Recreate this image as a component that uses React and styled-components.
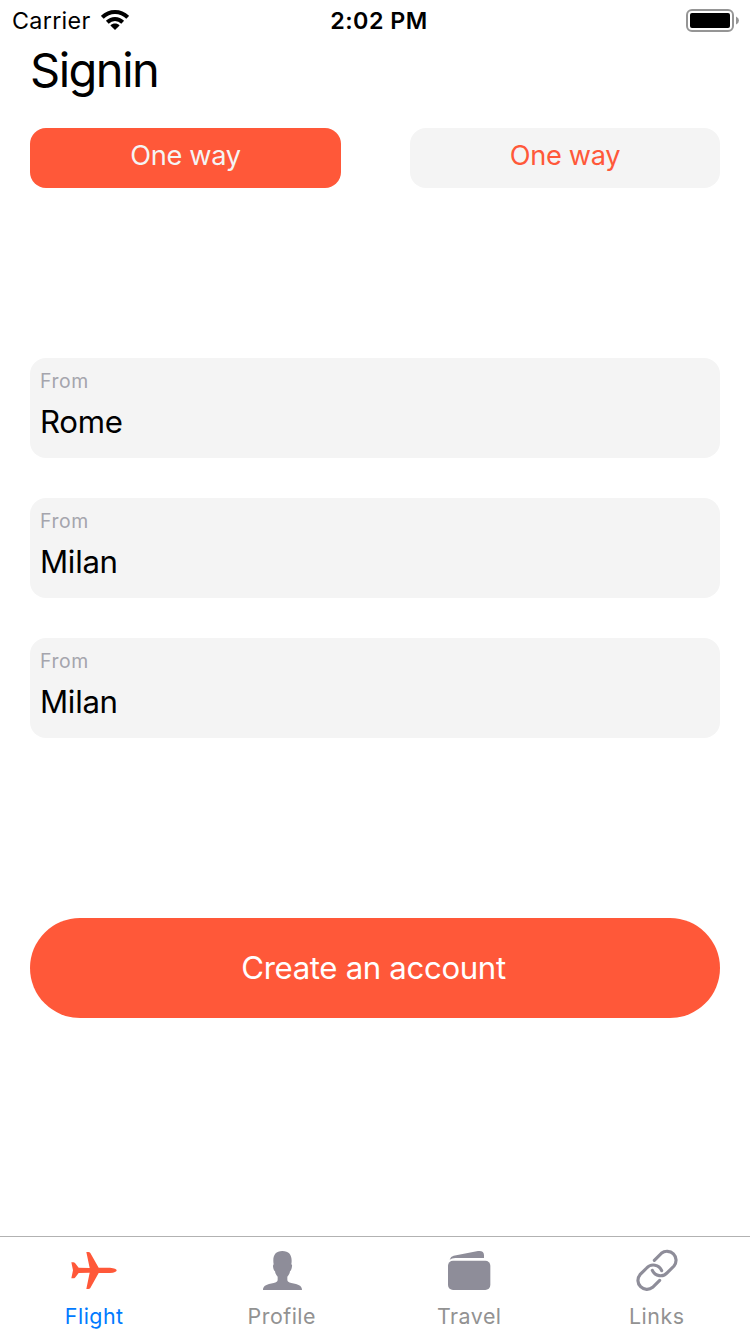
import React from 'react';
import styled, { createGlobalStyle } from 'styled-components';

const orange = '#ff5839';
const iconGray = '#8e8d99';

const GlobalStyle = createGlobalStyle`
  * { box-sizing: border-box; }
  body { margin: 0; background: #fff; }
  button { border: 0; padding: 0; font: inherit; }
`;

const Screen = styled.div`
  width: 750px;
  height: 1334px;
  display: flex;
  flex-direction: column;
  background: #fff;
  color: #000;
  font-family: Inter, "Liberation Sans", sans-serif;
  font-weight: 400;
  overflow: hidden;
`;

const StatusBar = styled.header`
  height: 40px;
  flex: none;
  display: grid;
  grid-template-columns: 1fr auto 1fr;
  align-items: center;
  padding: 2px 11px 0 12px;
  font-size: 23.3px;
  line-height: 38px;
`;

const Carrier = styled.div`
  display: flex;
  align-items: center;
  gap: 11px;
  letter-spacing: 0.3px;
  svg { display: block; margin-bottom: 2px; }
`;

const Clock = styled.div`
  font-weight: 600;
  letter-spacing: 0.5px;
  padding-left: 7px;
`;

const Battery = styled.svg`
  display: block;
  justify-self: end;
`;

const Content = styled.main`
  flex: 1;
  display: flex;
  flex-direction: column;
  padding: 0 30px;
`;

const Title = styled.h1`
  margin: 0;
  height: 88px;
  font-size: 47px;
  font-weight: 400;
  line-height: 59px;
  letter-spacing: -1.5px;
`;

const Toggle = styled.div`
  display: flex;
  justify-content: space-between;
`;

const ToggleButton = styled.button`
  width: ${(p) => (p.$active ? 311 : 310)}px;
  height: 60px;
  padding-bottom: 5px;
  border-radius: 16px;
  font-size: 27.2px;
  letter-spacing: -0.35px;
  line-height: 55px;
  background: ${(p) => (p.$active ? orange : '#f4f4f4')};
  color: ${(p) => (p.$active ? '#f4f4f4' : orange)};
`;

const Fields = styled.div`
  margin-top: 170px;
  display: flex;
  flex-direction: column;
  gap: 40px;
`;

const Field = styled.div`
  height: 100px;
  padding: 10px;
  border-radius: 16px;
  background: #f4f4f4;
`;

const FieldLabel = styled.div`
  font-size: 19.4px;
  line-height: 26px;
  letter-spacing: 0.6px;
  color: #a5a5ad;
`;

const FieldValue = styled.div`
  margin-top: 8px;
  font-size: 31.2px;
  line-height: 40px;
  letter-spacing: -0.3px;
`;

const Submit = styled.button`
  margin-top: 180px;
  height: 100px;
  border-radius: 50px;
  padding-right: 3px;
  background: ${orange};
  color: #fff;
  font-size: 31.2px;
  letter-spacing: -0.35px;
  line-height: 100px;
`;

const TabBar = styled.nav`
  height: 98px;
  flex: none;
  display: grid;
  grid-template-columns: repeat(4, 1fr);
  border-top: 1px solid #b2b2b2;
`;

const Tab = styled.div`
  display: flex;
  flex-direction: column;
  align-items: center;
  color: ${(p) => (p.$active ? '#007aff' : '#929292')};
  font-size: 21.4px;
  line-height: 28px;
  letter-spacing: 0.5px;
`;

const TabLabel = styled.span`
  padding-left: 1px;
`;

const IconBox = styled.div`
  height: 65px;
  display: flex;
  align-items: center;
  color: ${(p) => (p.$active ? orange : iconGray)};
  svg { display: block; overflow: visible; }
`;

const WifiIcon = () => (
  <svg width="28" height="20" viewBox="0 0 28 20" fill="none" stroke="#000" strokeWidth="4">
    <path d="M1.3 7.3C8.5 0.3 19.5 0.3 26.7 7.3" />
    <path d="M6.3 12.3C10.7 8 17.3 8 21.7 12.3" />
    <path d="M9.4 15.4C12 12.8 16 12.8 18.6 15.4L14 20Z" fill="#000" stroke="none" />
  </svg>
);

const PlaneIcon = () => (
  <svg width="90" height="65" viewBox="-3 21 270 195" fill="currentColor">
    <path d="M64 97H70Q73 97 75 99L86 113L119 114L109 66H115Q119 66 121 69L146 113H180Q200 115 200 121Q200 128 180 129H146L121 174Q119 177 115 177H109L119 128L86 129L75 143Q73 145 70 145H64L69 121Z" />
  </svg>
);

const PersonIcon = () => (
  <svg width="90" height="65" viewBox="0 21 270 195" fill="currentColor">
    <path d="M81 180C81 170 88 165 99 162L113 159C121 157 125 154 125 149V140C121 136 118 131 117 124C113 122 112 116 111 109Q111 104 113 103C109 79 116 63 139 63C162 63 170 79 166 103Q169 104 168 109C167 116 166 122 162 124C161 131 158 136 154 140V149C154 154 158 157 166 159L180 162C191 165 198 170 198 180Z" />
  </svg>
);

const WalletIcon = () => (
  <svg width="90" height="65" viewBox="0 21 270 195" fill="currentColor">
    <rect x="72" y="92" width="127" height="88" rx="15" />
    <path d="M77 89Q80 79 89 77L162 63Q180 61 180 76V84H94Q83 84 77 89Z" />
  </svg>
);

const LinkIcon = () => (
  <svg width="90" height="65" viewBox="-3 21 270 195" fill="none" stroke="currentColor" strokeWidth="9.5" strokeLinecap="round">
    <path d="M127 91L148 70A27 27 0 0 1 186 108L166 128A27 27 0 0 1 121 121" />
    <path d="M143 151L122 172A27 27 0 0 1 84 134L104 114A27 27 0 0 1 149 122" />
  </svg>
);

const fields = [
  ['From', 'Rome'],
  ['From', 'Milan'],
  ['From', 'Milan'],
];

const tabs = [
  ['Flight', PlaneIcon],
  ['Profile', PersonIcon],
  ['Travel', WalletIcon],
  ['Links', LinkIcon],
];

export default function App() {
  return (
    <>
      <GlobalStyle />
      <Screen>
        <StatusBar>
          <Carrier>
            <span>Carrier</span>
            <WifiIcon />
          </Carrier>
          <Clock>2:02 PM</Clock>
          <Battery width="53" height="24" viewBox="0 0 53 24">
            <rect x="1" y="1" width="46" height="21" rx="5" fill="none" stroke="#959595" strokeWidth="2" />
            <rect x="4" y="4" width="40" height="15" rx="2" fill="#000" />
            <path d="M50 7.5Q53 9 53 11.5T50 15.5Z" fill="#959595" />
          </Battery>
        </StatusBar>
        <Content>
          <Title>Signin</Title>
          <Toggle>
            <ToggleButton $active>One way</ToggleButton>
            <ToggleButton>One way</ToggleButton>
          </Toggle>
          <Fields>
            {fields.map(([label, value], i) => (
              <Field key={i}>
                <FieldLabel>{label}</FieldLabel>
                <FieldValue>{value}</FieldValue>
              </Field>
            ))}
          </Fields>
          <Submit>Create an account</Submit>
        </Content>
        <TabBar>
          {tabs.map(([label, Icon], i) => (
            <Tab key={label} $active={i === 0}>
              <IconBox $active={i === 0}>
                <Icon />
              </IconBox>
              <TabLabel>{label}</TabLabel>
            </Tab>
          ))}
        </TabBar>
      </Screen>
    </>
  );
}
